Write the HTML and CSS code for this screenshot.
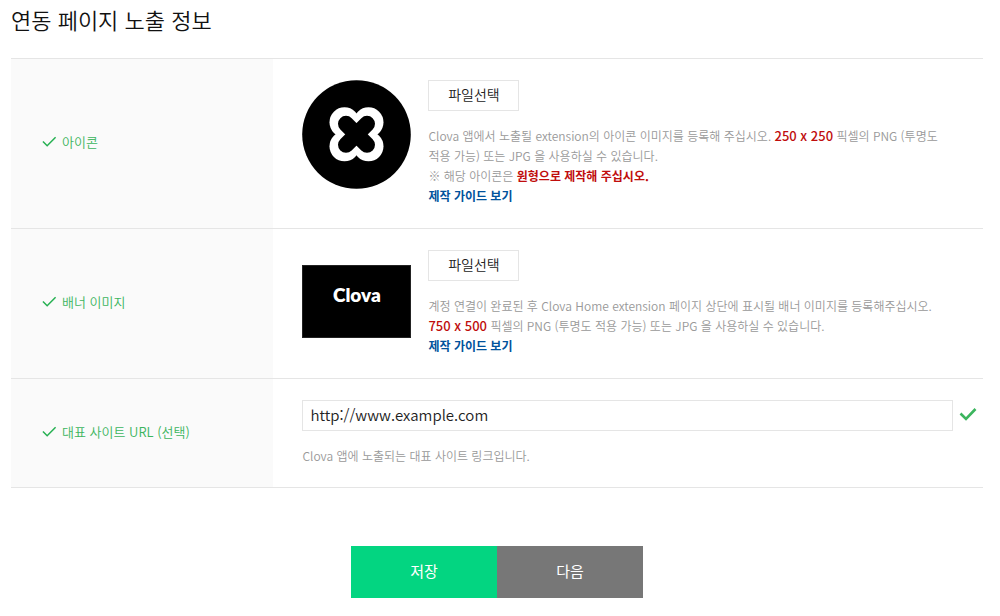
FILE: index.html
```html
<!DOCTYPE html>
<html lang="ko">
<head>
<meta charset="utf-8">
<meta name="viewport" content="width=device-width, initial-scale=1">
<title>연동 페이지 노출 정보</title>
<link rel="stylesheet" href="styles.css">
</head>
<body>
<main class="page">
  <h1 class="title">연동 페이지 노출 정보</h1>
  <form class="form">
    <section class="row">
      <h2 class="label">
        <svg class="check" viewBox="0 0 16 12" aria-hidden="true"><path d="M1 5.5 5.5 10 14.5 1"/></svg>
        <span>아이콘</span>
      </h2>
      <div class="field media">
        <svg class="thumb" viewBox="0 0 109 109" role="img" aria-label="Clova 아이콘">
          <circle cx="54.5" cy="54.5" r="54.3"/>
          <g fill="#fff"><circle cx="42.5" cy="42.3" r="15"/><circle cx="66.5" cy="42.3" r="15"/><circle cx="42.5" cy="66.3" r="15"/><circle cx="66.5" cy="66.3" r="15"/></g>
          <path d="M44 43.8 65 64.8M65 43.8 44 64.8" stroke="#000" stroke-width="16" stroke-linecap="round"/>
        </svg>
        <div class="body">
          <button class="file" type="button">파일선택</button>
          <p class="desc">Clova 앱에서 노출될 extension의 아이콘 이미지를 등록해 주십시오. <em class="size">250 x 250</em> 픽셀의 PNG (투명도 적용 가능) 또는 JPG 을 사용하실 수 있습니다.<br>※ 해당 아이콘은 <strong class="warn">원형으로 제작해 주십시오.</strong><br><a class="guide" href="#icon-guide">제작 가이드 보기</a></p>
        </div>
      </div>
    </section>
    <section class="row">
      <h2 class="label">
        <svg class="check" viewBox="0 0 16 12" aria-hidden="true"><path d="M1 5.5 5.5 10 14.5 1"/></svg>
        <span>배너 이미지</span>
      </h2>
      <div class="field media">
        <div class="banner">Clova</div>
        <div class="body">
          <button class="file" type="button">파일선택</button>
          <p class="desc">계정 연결이 완료된 후 Clova Home extension 페이지 상단에 표시될 배너 이미지를 등록해주십시오.<br><em class="size">750 x 500</em> 픽셀의 PNG (투명도 적용 가능) 또는 JPG 을 사용하실 수 있습니다.<br><a class="guide" href="#banner-guide">제작 가이드 보기</a></p>
        </div>
      </div>
    </section>
    <section class="row">
      <h2 class="label">
        <svg class="check" viewBox="0 0 16 12" aria-hidden="true"><path d="M1 5.5 5.5 10 14.5 1"/></svg>
        <label for="site-url">대표 사이트 URL (선택)</label>
      </h2>
      <div class="field">
        <div class="entry">
          <input class="url" id="site-url" type="text" value="http://www.example.com">
          <svg class="valid" viewBox="0 0 18 14" aria-hidden="true"><path d="M1.5 6.5 7 12 16.5 2"/></svg>
        </div>
        <p class="desc">Clova 앱에 노출되는 대표 사이트 링크입니다.</p>
      </div>
    </section>
    <div class="actions">
      <button class="action save" type="submit">저장</button>
      <button class="action next" type="button">다음</button>
    </div>
  </form>
</main>
</body>
</html>
```
FILE: styles.css
```css
* { box-sizing: border-box; }
body {
  margin: 0;
  background: #fff;
  color: #222;
  font-family: "Noto Sans CJK KR", sans-serif;
}
h1, h2, p { margin: 0; }
button, input { font-family: inherit; }
.page { padding: 3px 17px 18px 11px; }
.title {
  margin-bottom: 23px;
  color: #111;
  font-size: 22px;
  font-weight: 350;
  line-height: 32px;
}
.row {
  display: grid;
  grid-template-columns: 27% 1fr;
  border-top: 1px solid #e5e5e5;
}
.label {
  display: flex;
  align-items: center;
  gap: 5px;
  padding: 0 0 3px 31px;
  background: #fafafa;
  color: #3cb55e;
  font-size: 13px;
  font-weight: 350;
  line-height: 20px;
}
.check {
  width: 15px;
  height: 12px;
  fill: none;
  stroke: #26b052;
  stroke-width: 1.6;
}
.field { padding: 21px 29px 21px 29px; }
.media {
  display: flex;
  gap: 17px;
  padding-bottom: 22px;
}
.thumb {
  flex: none;
  width: 109px;
  height: 109px;
}
.banner {
  flex: none;
  align-self: center;
  width: 109px;
  height: 73px;
  margin-bottom: 3px;
  border: 1px solid #222;
  background: #000;
  color: #fff;
  font-family: Lato, sans-serif;
  font-size: 19px;
  font-weight: 800;
  line-height: 58px;
  text-align: center;
}
.body { flex: 1; }
.file {
  display: block;
  width: 91px;
  height: 31px;
  padding: 0 0 4px;
  border: 1px solid #e5e5e5;
  background: #fff;
  color: #222;
  font-size: 14px;
  font-weight: 350;
}
.desc {
  margin-top: 15px;
  color: #999;
  font-size: 12px;
  font-weight: 350;
  line-height: 20px;
  word-break: keep-all;
}
.size, .warn { color: #c00d0d; font-style: normal; }
.size { font-weight: 500; font-size: 13px; line-height: 1; }
.warn, .guide { font-weight: 700; }
.guide { color: #00529c; text-decoration: none; }
.entry {
  display: flex;
  align-items: center;
  gap: 6px;
  margin-right: -23px;
}
.url {
  flex: 1;
  min-width: 0;
  height: 31px;
  padding: 0 7px 3px;
  border: 1px solid #e5e5e5;
  color: #222;
  font-size: 15px;
  font-weight: 350;
}
.valid {
  width: 18px;
  height: 14px;
  margin-bottom: 3px;
  fill: none;
  stroke: #3cb55e;
  stroke-width: 2.6;
}
.actions {
  display: flex;
  justify-content: center;
  padding-top: 58px;
  border-top: 1px solid #e5e5e5;
}
.action {
  width: 146px;
  height: 52px;
  padding: 0 0 4px;
  border: 0;
  color: #fff;
  font-size: 15px;
  font-weight: 400;
}
.save { background: #03d581; }
.next { background: #777; }
```
